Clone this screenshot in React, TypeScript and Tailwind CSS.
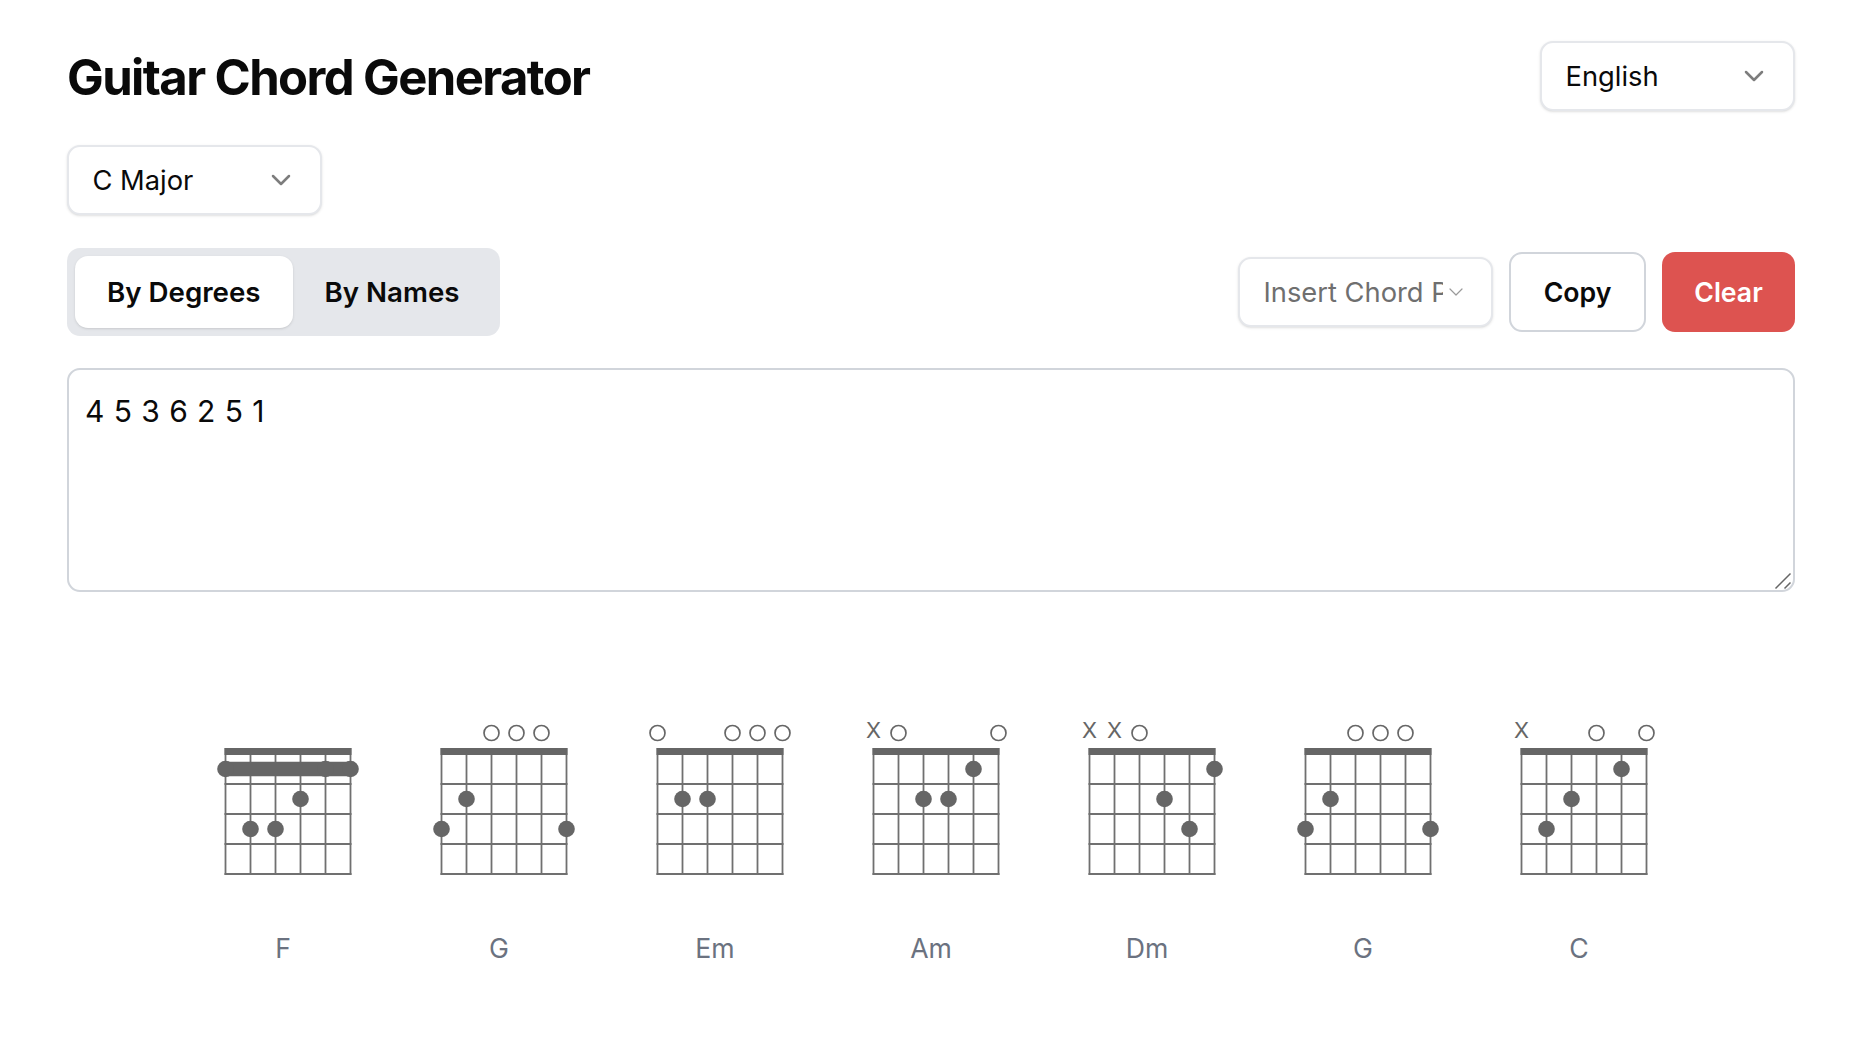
import { ChevronDown } from "lucide-react";

type Chord = {
  name: string;
  open: number[];
  muted: number[];
  dots: [number, number][];
  barre?: boolean;
};

const CHORDS: Chord[] = [
  { name: "F", open: [], muted: [], barre: true, dots: [[3, 2], [1, 3], [2, 3]] },
  { name: "G", open: [2, 3, 4], muted: [], dots: [[1, 2], [0, 3], [5, 3]] },
  { name: "Em", open: [0, 3, 4, 5], muted: [], dots: [[1, 2], [2, 2]] },
  { name: "Am", open: [1, 5], muted: [0], dots: [[4, 1], [2, 2], [3, 2]] },
  { name: "Dm", open: [2], muted: [0, 1], dots: [[5, 1], [3, 2], [4, 3]] },
  { name: "G", open: [2, 3, 4], muted: [], dots: [[1, 2], [0, 3], [5, 3]] },
  { name: "C", open: [3, 5], muted: [0], dots: [[4, 1], [2, 2], [1, 3]] },
];

const LEFT = 50.5;
const TOP = 54;
const CELL_W = 25;
const CELL_H = 30;
const INK = "#666666";
const LINE = "#707070";

function ChordDiagram({ chord }: { chord: Chord }) {
  const sx = (s: number) => LEFT + s * CELL_W;
  const fy = (f: number) => TOP + f * CELL_H;
  return (
    <svg width="216" height="220" viewBox="0 0 216 220">
      {[0, 1, 2, 3, 4, 5].map((s) => (
        <line key={s} x1={sx(s)} x2={sx(s)} y1={TOP - 6} y2={fy(4) + 1} stroke={LINE} strokeWidth="1.8" />
      ))}
      {[1, 2, 3, 4].map((f) => (
        <line key={f} x1={LEFT - 1} x2={sx(5) + 1} y1={fy(f)} y2={fy(f)} stroke={LINE} strokeWidth="2" />
      ))}
      <rect x={LEFT - 1} y={TOP - 6} width={CELL_W * 5 + 2} height="7" fill={INK} />
      {chord.barre && (
        <>
          <line x1={sx(0)} x2={sx(5)} y1={fy(0) + 15} y2={fy(0) + 15} stroke={INK} strokeWidth="14.5" />
          {[0, 4, 5].map((s) => (
            <circle key={s} cx={sx(s)} cy={fy(0) + 15} r="8.3" fill={INK} />
          ))}
        </>
      )}
      {chord.dots.map(([s, f]) => (
        <circle key={`${s}-${f}`} cx={sx(s)} cy={fy(f - 1) + 15} r="8.3" fill={INK} />
      ))}
      {chord.open.map((s) => (
        <circle key={s} cx={sx(s)} cy="33" r="7.5" fill="none" stroke={INK} strokeWidth="1.67" />
      ))}
      {chord.muted.map((s) => (
        <text key={s} x={sx(s)} y="37.5" textAnchor="middle" fontSize="22" fill={INK} fontFamily="Inter, sans-serif">
          X
        </text>
      ))}
    </svg>
  );
}

function Select({ label, muted }: { label: string; muted?: boolean }) {
  return (
    <div className="flex h-[70px] w-[255px] items-center justify-between rounded-[13px] border-2 border-[#e5e7eb] bg-white pl-[23.5px] pr-[23px] text-[27.3px] shadow-sm">
      <span className={muted ? "w-[179px] overflow-hidden whitespace-nowrap pt-[2px] text-[#6f6f6f]" : "pt-[2px] text-[#0a0a0a]"}>{label}</span>
      {muted ? (
        <ChevronDown className="h-[24px] w-[24px] shrink-0 text-[#9a9a9a]" strokeWidth={1.2} />
      ) : (
        <ChevronDown className="h-[32px] w-[32px] text-[#7d7d7d]" strokeWidth={1.9} />
      )}
    </div>
  );
}

export default function App() {
  return (
    <div className="min-h-screen bg-white pb-[70px] pl-[67px] pr-[77px] pt-[41px] font-['Inter',sans-serif] text-[26.67px] text-[#0a0a0a]">
      {/* Header */}
      <header className="flex items-center justify-between">
        <h1 className="pt-[4px] text-[49px] font-bold leading-[66px] tracking-[-1.6px]">Guitar Chord Generator</h1>
        <Select label="English" />
      </header>

      <div className="mt-[34px]">
        <Select label="C Major" />
      </div>

      {/* Toolbar */}
      <div className="mt-[33px] flex items-center justify-between">
        <div className="flex h-[88px] items-center rounded-[13px] bg-[#e5e7eb] p-[8px] text-[27.7px] font-semibold">
          <button className="h-[72px] rounded-[13px] bg-white px-[32px] pt-[2px] shadow-sm">By Degrees</button>
          <button className="h-[72px] rounded-[13px] px-[32px] pt-[2px]">By Names</button>
        </div>
        <div className="flex items-center gap-[16px]">
          <Select label="Insert Chord Progression" muted />
          <button className="h-[80px] w-[137px] rounded-[13px] border-2 border-[#d1d5db] bg-white font-semibold">Copy</button>
          <button className="h-[80px] w-[133px] rounded-[13px] bg-[#dd5350] font-semibold text-white">Clear</button>
        </div>
      </div>

      <div className="relative mt-[32px]">
        <textarea
          className="block h-[224px] w-full resize-none rounded-[13px] border-2 border-[#d1d5db] bg-white px-[16px] py-[21px] text-[30px] leading-[40px] tracking-[0.45px] outline-none"
          defaultValue="4 5 3 6 2 5 1"
        />
        {/* resize grip */}
        <svg className="absolute bottom-[2px] right-[3px]" width="18" height="18" viewBox="0 0 18 18" stroke="#666666" strokeWidth="1.5" fill="none">
          <path d="M1.5 16.5 16.5 1.5M10.5 16.5l6-6" />
        </svg>
      </div>

      {/* Chord diagrams */}
      <div className="mt-[108px] flex justify-center">
        {CHORDS.map((c, i) => (
          <div key={i} className="flex w-[216px] flex-col items-center">
            <ChordDiagram chord={c} />
            <span className="mt-[6px] leading-[44px] text-[#6b7280]">{c.name}</span>
          </div>
        ))}
      </div>
    </div>
  );
}
